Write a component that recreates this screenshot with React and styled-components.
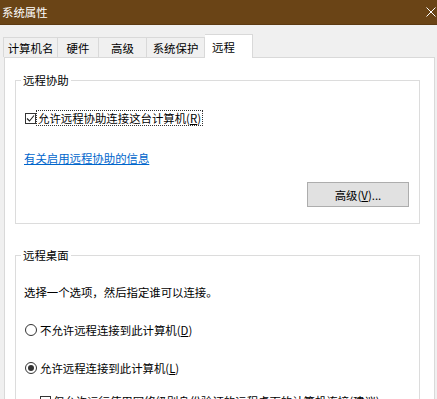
import React from "react"
import styled, { createGlobalStyle } from "styled-components"

const GlobalStyle = createGlobalStyle`
  html, body {
    margin: 0;
    padding: 0;
    background: #f0f0f0;
    overflow: hidden;
  }
  body {
    font-family: "Noto Sans CJK SC", "Noto Sans", sans-serif;
    font-size: 11.4px;
    color: #000;
  }
`

const tabs = [
  { label: "计算机名", w: 55 },
  { label: "硬件", w: 41 },
  { label: "高级", w: 48 },
  { label: "系统保护", w: 58 },
  { label: "远程", w: 48, active: true },
]

const CheckIcon = () => (
  <svg width="9" height="9" viewBox="0 0 9 9">
    <path d="M1 4.5 L3.5 7 L8 1.5" fill="none" stroke="#222" strokeWidth="1.1" />
  </svg>
)

const CloseIcon = () => (
  <svg width="10" height="10" viewBox="0 0 10 10">
    <path d="M0.5 0.5 L9.5 9.5 M9.5 0.5 L0.5 9.5" stroke="#fff" strokeWidth="1" />
  </svg>
)

const App = () => (
  <Window>
    <GlobalStyle />
    <TitleBar>
      <Title>系统属性</Title>
      <CloseIcon />
    </TitleBar>
    <TabStrip>
      {tabs.map((t) => (
        <Tab key={t.label} $w={t.w} $active={t.active}>
          {t.label}
        </Tab>
      ))}
    </TabStrip>
    <Panel>
      <Group>
        <Legend>远程协助</Legend>
        <GroupBody>
          <Row $mt={20}>
            <CheckBox>
              <CheckIcon />
            </CheckBox>
            <FocusLabel>
              允许远程协助连接这台计算机(<U>R</U>)
            </FocusLabel>
          </Row>
          <Row $mt={20}>
            <Link>有关启用远程协助的信息</Link>
          </Row>
          <Row $mt={14} $h={25}>
            <Button>
              高级(<U>V</U>)...
            </Button>
          </Row>
        </GroupBody>
      </Group>
      <Group $mt={23}>
        <Legend>远程桌面</Legend>
        <GroupBody>
          <Row $mt={19}>
            <Text $gap={-1}>选择一个选项，然后指定谁可以连接。</Text>
          </Row>
          <Row $mt={18}>
            <Radio />
            <Text>
              不允许远程连接到此计算机(<U>D</U>)
            </Text>
          </Row>
          <Row $mt={18}>
            <Radio $checked />
            <Text>
              允许远程连接到此计算机(<U>L</U>)
            </Text>
          </Row>
          <Row $mt={13} $indent={15}>
            <CheckBox />
            <Text $gap={2}>仅允许运行使用网络级别身份验证的远程桌面的计算机连接(建议)</Text>
          </Row>
        </GroupBody>
      </Group>
    </Panel>
  </Window>
)

const Window = styled.div`
  width: 437px;
  height: 399px;
  display: flex;
  flex-direction: column;
  overflow: hidden;
  background: #f0f0f0;
`

const TitleBar = styled.div`
  height: 25px;
  flex: none;
  box-sizing: border-box;
  background: #6a4416;
  border-bottom: 1px solid #5c3a12;
  display: flex;
  align-items: center;
  justify-content: space-between;
  padding: 0 1px 1px 2px;
`

const Title = styled.span`
  color: #fff;
  line-height: 16px;
`

const TabStrip = styled.div`
  display: flex;
  align-items: flex-end;
  height: 24px;
  flex: none;
  padding: 8px 0 0 3px;
`

const Tab = styled.div`
  width: ${(p) => p.$w}px;
  height: ${(p) => (p.$active ? 24 : 20)}px;
  box-sizing: border-box;
  border: 1px solid #d9d9d9;
  border-bottom: none;
  border-left: none;
  background: ${(p) => (p.$active ? "#fff" : "#f0f0f0")};
  display: flex;
  align-items: center;
  justify-content: ${(p) => (p.$active ? "flex-start" : "center")};
  padding-left: ${(p) => (p.$active ? 7 : 0)}px;
  margin-bottom: ${(p) => (p.$active ? -1 : 0)}px;
  position: relative;
  z-index: ${(p) => (p.$active ? 2 : 0)};
  line-height: 16px;
  &:first-child {
    border-left: 1px solid #d9d9d9;
  }
`

const Panel = styled.div`
  flex: 1;
  margin: 0 2px 0 4px;
  background: #fff;
  border: 1px solid #d9d9d9;
  padding: 14px 14px 0 10px;
  position: relative;
  z-index: 1;
`

const Group = styled.fieldset`
  margin: ${(p) => p.$mt || 0}px 0 0 0;
  padding: 0 10px 16px 9px;
  border: 1px solid #dcdcdc;
  min-inline-size: 0;
`

const Legend = styled.legend`
  padding: 0 2px;
  margin-left: -4px;
  line-height: 16px;
`

const GroupBody = styled.div`
  display: flex;
  flex-direction: column;
`

const Row = styled.div`
  display: flex;
  align-items: center;
  height: ${(p) => p.$h || 20}px;
  margin-top: ${(p) => p.$mt || 0}px;
  padding-left: ${(p) => p.$indent || 0}px;
  white-space: nowrap;
`

const CheckBox = styled.span`
  width: 11px;
  height: 11px;
  flex: none;
  box-sizing: border-box;
  border: 1px solid #333;
  background: #fff;
  display: flex;
  align-items: center;
  justify-content: center;
`

const FocusLabel = styled.span`
  margin-left: 1px;
  padding: 0 1px;
  line-height: 14px;
  outline: 1px dotted #333;
`

const Text = styled.span`
  margin-left: ${(p) => p.$gap ?? 3}px;
  line-height: 16px;
`

const U = styled.span`
  text-decoration: underline;
`

const Link = styled.span`
  margin-left: -1px;
  color: #0066cc;
  text-decoration: underline;
  line-height: 16px;
`

const Button = styled.button`
  margin-left: auto;
  width: 102px;
  height: 25px;
  background: #e1e1e1;
  border: 1px solid #adadad;
  font: inherit;
  color: #000;
  padding: 0;
  display: flex;
  align-items: center;
  justify-content: center;
`

const Radio = styled.span`
  width: 12px;
  height: 12px;
  flex: none;
  box-sizing: border-box;
  border: 1px solid #333;
  border-radius: 50%;
  background: #fff;
  display: flex;
  align-items: center;
  justify-content: center;
  &::after {
    content: "";
    width: 6px;
    height: 6px;
    border-radius: 50%;
    background: #333;
    display: ${(p) => (p.$checked ? "block" : "none")};
  }
`

export default App
